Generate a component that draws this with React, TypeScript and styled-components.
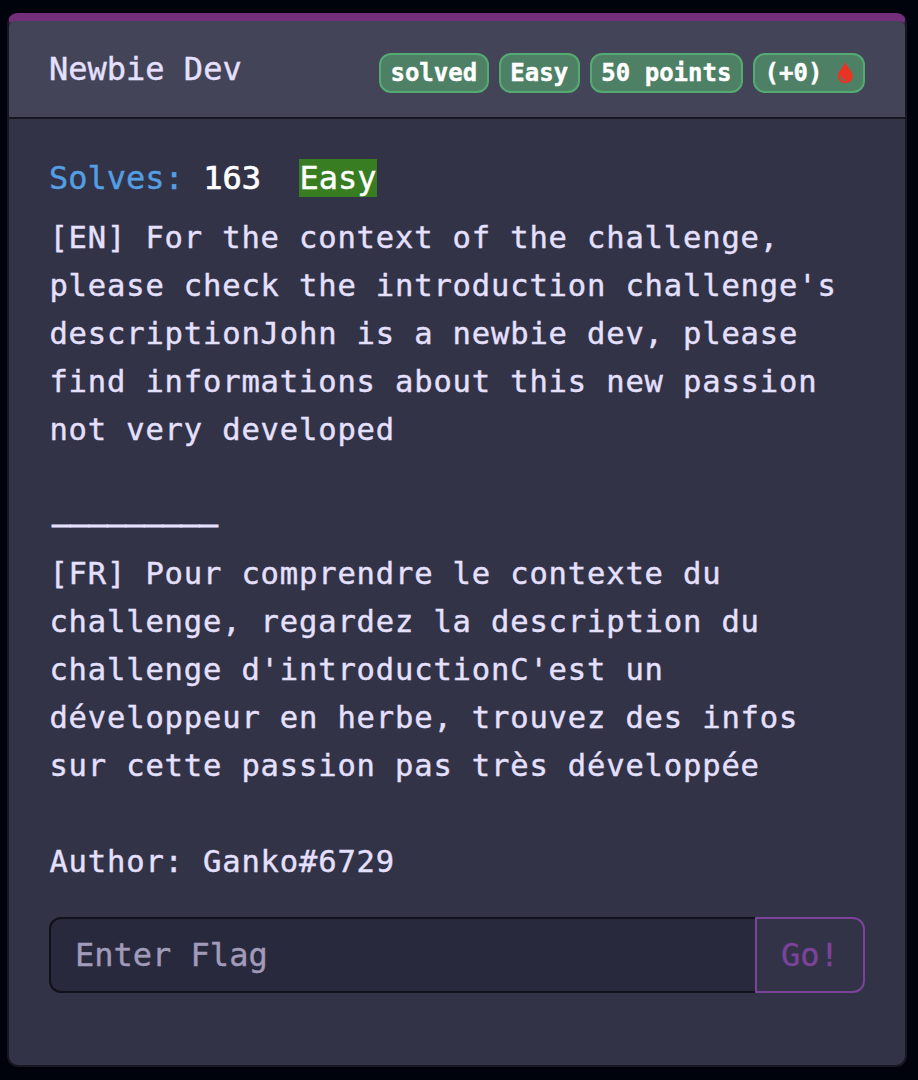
import React from "react";
import styled, { createGlobalStyle } from "styled-components";

const GlobalStyle = createGlobalStyle`
  *, *::before, *::after { box-sizing: border-box; }
  body {
    margin: 0;
    background: #00020c;
    font-family: "DejaVu Sans Mono", monospace;
    font-size: 32px;
    color: #e6e0ff;
    -webkit-text-stroke: 0.4px currentColor;
  }
`;

const Page = styled.main`
  min-height: 1080px;
  padding: 13px 11px 13px 7px;
`;

const Card = styled.article`
  height: 1054px;
  background: #333348;
  border: 2px solid #171722;
  border-top: 8px solid #732f7a;
  border-radius: 11px;
`;

const Header = styled.header`
  display: flex;
  justify-content: space-between;
  align-items: flex-start;
  height: 98px;
  padding: 32px 40px 0;
  background: #444458;
  border-bottom: 2px solid #171722;
  border-radius: 7px 7px 0 0;
`;

const Title = styled.h1`
  margin: -8px 0 0;
  font-size: 32px;
  font-weight: 400;
  line-height: 48px;
`;

const Badges = styled.div`
  display: flex;
  gap: 10px;
`;

const Badge = styled.span`
  display: flex;
  align-items: center;
  height: 40px;
  padding: 0 9.6px;
  border: 2px solid #54ab72;
  border-radius: 12px;
  background: #4e8066;
  color: #fff;
  font-size: 24px;
  font-weight: 700;
  white-space: pre;
`;

const DropIcon = styled.svg`
  width: 16.6px;
  height: 24px;
`;

const Body = styled.section`
  padding: 35px 40px 0;
`;

const Stats = styled.div`
  height: 60px;
  line-height: 48px;
  white-space: pre;
`;

const Label = styled.span`
  color: #549fe3;
`;

const Count = styled.span`
  color: #fff;
  -webkit-text-stroke-width: 0.7px;
`;

const Difficulty = styled.span`
  display: inline-block;
  height: 38px;
  line-height: 38px;
  color: #fff;
  background: #387d22;
`;

const Description = styled.p`
  margin: 0;
  padding-left: 0.4px;
  font-size: 30.5px;
  letter-spacing: 0.838px;
  line-height: 48px;
  white-space: pre;
`;

const Divider = styled.div`
  height: 50px;
  margin-top: 46px;
  padding-left: 3px;
  font-size: 30.63px;
  line-height: 48px;
  -webkit-text-stroke-width: 1px;
`;

const FlagForm = styled.form`
  display: flex;
  height: 76px;
  margin-top: 31px;
`;

const FlagInput = styled.input`
  flex: 1;
  min-width: 0;
  padding: 0 24px;
  border: 2px solid #11111b;
  border-right: 0;
  border-radius: 12px 0 0 12px;
  background: #29293d;
  color: #e6e0ff;
  font: inherit;
  outline: none;
  &::placeholder { color: #a19bb9; opacity: 1; }
`;

const GoButton = styled.button`
  width: 110px;
  padding: 0;
  border: 2px solid #7b439a;
  border-radius: 0 12px 12px 0;
  background: transparent;
  color: #7b439a;
  font: inherit;
  -webkit-text-stroke: 0.4px currentColor;
`;

const english = `[EN] For the context of the challenge,
please check the introduction challenge's
descriptionJohn is a newbie dev, please
find informations about this new passion
not very developed`;

const french = `[FR] Pour comprendre le contexte du
challenge, regardez la description du
challenge d'introductionC'est un
développeur en herbe, trouvez des infos
sur cette passion pas très développée

Author: Ganko#6729`;

export default function App() {
  return (
    <>
      <GlobalStyle />
      <Page>
        <Card>
          <Header>
            <Title>Newbie Dev</Title>
            <Badges>
              <Badge>solved</Badge>
              <Badge>Easy</Badge>
              <Badge>50 points</Badge>
              <Badge>
                {"(+0) "}
                <DropIcon viewBox="0 0 16.6 24" aria-hidden="true">
                  <path
                    d="M8.3 .8C9.7 6.2 15.8 10.2 15.8 15.3a7.5 7 0 0 1-15 0C.8 10.2 6.9 6.2 8.3 .8Z"
                    fill="#ea3323"
                  />
                  <path
                    d="M3.8 15.2c.3 2.6 2 4 4.3 4.2"
                    fill="none"
                    stroke="#4e8066"
                    strokeWidth="1.3"
                    strokeLinecap="round"
                  />
                </DropIcon>
              </Badge>
            </Badges>
          </Header>
          <Body>
            <Stats>
              <Label>Solves:</Label> <Count>163</Count>{"  "}
              <Difficulty>Easy</Difficulty>
            </Stats>
            <Description>{english}</Description>
            <Divider>—————————</Divider>
            <Description>{french}</Description>
            <FlagForm onSubmit={(e: React.FormEvent) => e.preventDefault()}>
              <FlagInput placeholder="Enter Flag" aria-label="Flag" />
              <GoButton type="submit">Go!</GoButton>
            </FlagForm>
          </Body>
        </Card>
      </Page>
    </>
  );
}
